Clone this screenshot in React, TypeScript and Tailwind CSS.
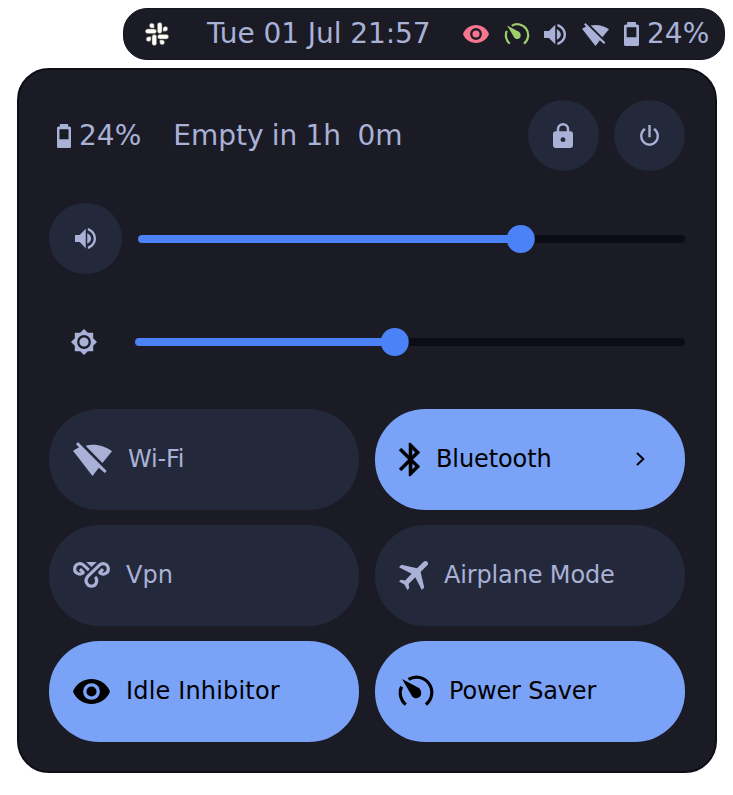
import type { ReactNode } from "react";

type IconProps = { className?: string };

const EYE =
  "M12,9A3,3 0 0,0 9,12A3,3 0 0,0 12,15A3,3 0 0,0 15,12A3,3 0 0,0 12,9M12,17A5,5 0 0,1 7,12A5,5 0 0,1 12,7A5,5 0 0,1 17,12A5,5 0 0,1 12,17M12,4.5C7,4.5 2.73,7.61 1,12C2.73,16.39 7,19.5 12,19.5C17,19.5 21.27,16.39 23,12C21.27,7.61 17,4.5 12,4.5Z";
const LOCK =
  "M12,17A2,2 0 0,0 14,15C14,13.89 13.1,13 12,13A2,2 0 0,0 10,15A2,2 0 0,0 12,17M18,8A2,2 0 0,1 20,10V20A2,2 0 0,1 18,22H6A2,2 0 0,1 4,20V10C4,8.89 4.9,8 6,8H7V6A5,5 0 0,1 12,1A5,5 0 0,1 17,6V8H18M12,3A3,3 0 0,0 9,6V8H15V6A3,3 0 0,0 12,3Z";
const POWER =
  "M16.56,5.44L15.11,6.89C16.84,7.94 18,9.83 18,12A6,6 0 0,1 12,18A6,6 0 0,1 6,12C6,9.83 7.16,7.94 8.88,6.88L7.44,5.44C5.36,6.88 4,9.28 4,12A8,8 0 0,0 12,20A8,8 0 0,0 20,12C20,9.28 18.64,6.88 16.56,5.44M13,3H11V13H13";
const BLUETOOTH =
  "M14.88,16.29L13,18.17V14.41M13,5.83L14.88,7.71L13,9.58M17.71,7.71L12,2H11V9.58L6.41,5L5,6.41L10.59,12L5,17.58L6.41,19L11,14.41V22H12L17.71,16.29L13.41,12L17.71,7.71Z";
const AIRPLANE =
  "M20.56 3.91C21.15 4.5 21.15 5.45 20.56 6.03L16.67 9.92L18.79 19.11L17.38 20.53L13.5 13.1L9.6 17L9.96 19.47L8.89 20.53L7.13 17.35L3.94 15.58L5 14.5L7.5 14.87L11.37 11L3.94 7.09L5.36 5.68L14.55 7.8L18.44 3.91C19 3.33 20 3.33 20.56 3.91Z";
const SPEAKER =
  "M14,3.23V5.29C16.89,6.15 19,8.83 19,12C19,15.17 16.89,17.84 14,18.7V20.77C18,19.86 21,16.28 21,12C21,7.72 18,4.14 14,3.23M16.8,12C16.8,10.23 15.5,8.51 13.5,7.6V16.4C15.5,15.49 16.8,13.76 16.8,12M3,9V15H7L12.2,20.2V3.8L7,9H3Z";
const BRIGHTNESS =
  "M12,8A4,4 0 0,0 8,12A4,4 0 0,0 12,16A4,4 0 0,0 16,12A4,4 0 0,0 12,8M12,18A6,6 0 0,1 6,12A6,6 0 0,1 12,6A6,6 0 0,1 18,12A6,6 0 0,1 12,18M20,8.69V4H15.31L12,0.69L8.69,4H4V8.69L0.69,12L4,15.31V20H8.69L12,23.31L15.31,20H20V15.31L23.31,12L20,8.69Z";
const BATTERY =
  "M15.9,14.8H8.1V6.4H15.900M16.67,4H15.5V2H8.5V4H7.33A1.33,1.33 0 0,0 6,5.33V20.67C6,21.4 6.6,22 7.33,22H16.67A1.33,1.33 0 0,0 18,20.67V5.33A1.33,1.33 0 0,0 16.67,4Z";

function Glyph({ d, box, className = "" }: { d: string; box: string; className?: string }) {
  return (
    <svg viewBox={box} preserveAspectRatio="none" fill="currentColor" className={`block shrink-0 ${className}`}>
      <path d={d} />
    </svg>
  );
}

function WifiOff({ className = "" }: IconProps) {
  return (
    <Glyph
      box="98 126 118 102"
      d="M113 126L200 213L194 219L176 203L157 228L98 152L116 142L107 133ZM136 137C165 130 195 138 216 154L187 189Z"
      className={className}
    />
  );
}

function Gauge({ className = "" }: IconProps) {
  return (
    <svg viewBox="87 124 100 88" className={`block shrink-0 overflow-visible ${className}`} fill="none">
      <path d="M107 208A45 45 0 0 1 94.500 155M115 134A45 45 0 0 1 166 208" stroke="currentColor" strokeWidth="9.200" />
      <path d="M96 133L147 160C153 167 154 177 150 183C144 191 132 191 126 184Z" fill="currentColor" />
    </svg>
  );
}

function Vpn({ className = "" }: IconProps) {
  return (
    <svg viewBox="98 126 112 78" className={`block shrink-0 overflow-visible ${className}`} fill="none">
      <path
        d="M119 147L130 158C120 167 102.500 160 103 147C103 132.500 119 125.500 130 135L146 150"
        stroke="currentColor"
        strokeWidth="9.500"
        strokeLinejoin="bevel"
      />
      <path
        d="M189 147L178 158C188 167 205.500 160 205 147C205 132.500 189 125.500 178 135L142 170C132 182 140 199 154 199C168 199 175 181 165 171"
        stroke="currentColor"
        strokeWidth="9.500"
        strokeLinejoin="bevel"
      />
      <path d="M138 126H170L154 141Z" fill="currentColor" />
    </svg>
  );
}

function Slack({ className = "" }: IconProps) {
  return (
    <svg viewBox="0 0 24 24" className={`block shrink-0 ${className}`}>
      {[0, 90, 180, 270].map((turn) => (
        <g key={turn} transform={`rotate(${turn} 12 12)`} fill="#fdfdf8" stroke="#6b6d64" strokeWidth=".5">
          <rect x="12.400" y="0.400" width="4.600" height="11" rx="2.300" />
          <path d="M18 9.200V6.900A2.400 2.400 0 1 1 20.300 9.200Z" />
        </g>
      ))}
    </svg>
  );
}

function Slider({ value, className = "" }: { value: number; className?: string }) {
  return (
    <div className={`relative h-2 rounded-full bg-[#0c0c14] ${className}`}>
      <div className="h-2 rounded-full bg-[#4c82f7]" style={{ width: value }} />
      <div
        className="absolute -top-2.5 size-[28.5px] -translate-x-1/2 rounded-full bg-[#4c82f7]"
        style={{ left: value }}
      />
    </div>
  );
}

function Tile({
  icon,
  label,
  active,
  labelClass = "",
  children,
}: {
  icon: ReactNode;
  label: string;
  active?: boolean;
  labelClass?: string;
  children?: ReactNode;
}) {
  return (
    <div
      className={`flex h-[100.5px] items-center gap-4 rounded-[50px] pr-10 pl-6 text-[24px] leading-7 ${
        active ? "bg-[#7aa2f7] text-black" : "bg-[#24283b] text-[#a9b1d6]"
      }`}
    >
      {icon}
      <span className={`whitespace-nowrap ${labelClass}`}>{label}</span>
      {children}
    </div>
  );
}

export default function App() {
  return (
    <div className="h-[795px] w-[733px] overflow-hidden bg-white pt-2 font-['DejaVu_Sans',sans-serif] text-[28px] leading-8 text-[#a9b1d6]">
      <header className="ml-[123px] flex h-[52px] w-[602px] items-center rounded-[24px] border border-[#15151f] bg-[#1b1b26] pl-[21px] whitespace-nowrap">
        <Slack className="size-6" />
        <span className="ml-[38px] w-[224px] tracking-[-0.07px]">Tue 01 Jul 21:57</span>
        <Glyph d={EYE} box="1 4.500 22 15" className="ml-8 h-[18px] w-[26px] text-[#f7768e]" />
        <Gauge className="ml-4 h-[22px] w-6 text-[#9ece6a]" />
        <Glyph d={SPEAKER} box="3 3.230 18 17.540" className="ml-[15px] h-[21px] w-[22px]" />
        <WifiOff className="ml-4 h-[23px] w-[27px]" />
        <Glyph d={BATTERY} box="6 2 12 20" className="ml-[15px] h-6 w-[15px]" />
        <span className="ml-2">24%</span>
      </header>

      <main className="mt-2 ml-[17px] h-[705px] w-[700px] rounded-[32px] border-2 border-[#0e0e16] bg-[#1b1b26] px-[30px] pt-[30px]">
        <div className="flex h-[71px] items-center whitespace-nowrap">
          <Glyph d={BATTERY} box="6 2 12 20" className="ml-2 h-6 w-3.5" />
          <span className="ml-2">24%</span>
          <span className="ml-8 whitespace-pre [word-spacing:-0.7px]">Empty in 1h  0m</span>
          <div className="ml-auto flex gap-[15.5px]">
            <button className="flex size-[71px] items-center justify-center rounded-full bg-[#24283b]">
              <Glyph d={LOCK} box="4 1 16 21" className="h-[25px] w-5" />
            </button>
            <button className="flex size-[71px] items-center justify-center rounded-full bg-[#24283b]">
              <Glyph d={POWER} box="4 3 16 17" className="h-[21px] w-[19px]" />
            </button>
          </div>
        </div>

        <div className="mt-8 flex h-[71px] items-center">
          <button className="flex h-[71px] w-[73px] items-center justify-center rounded-full bg-[#24283b]">
            <Glyph d={SPEAKER} box="3 3.230 18 17.540" className="h-[21px] w-[21px]" />
          </button>
          <Slider value={382.5} className="ml-4 w-[547px]" />
        </div>

        <div className="mt-8 flex h-[71px] items-center">
          <Glyph d={BRIGHTNESS} box=".690 .690 22.620 22.620" className="ml-[22px] size-[26px]" />
          <Slider value={259.5} className="ml-[38px] w-[550px]" />
        </div>

        <div className="mt-8 grid grid-cols-2 gap-x-4 gap-y-[15.5px]">
          <Tile icon={<WifiOff className="h-[34px] w-[39px]" />} label="Wi-Fi" labelClass="tracking-[-0.2px]" />
          <Tile
            icon={
              <Glyph
                d={BLUETOOTH}
                box="5 2 12.710 20"
                className="h-[33px] w-[21px] overflow-visible stroke-current stroke-[.2px]"
              />
            }
            label="Bluetooth"
            labelClass="tracking-[-0.1px]"
            active
          >
            <svg viewBox="0 0 9 14" className="ml-auto h-3.5 w-[9px]" fill="none" stroke="currentColor" strokeWidth="2">
              <path d="M1 1L7.300 7L1 13" />
            </svg>
          </Tile>
          <Tile icon={<Vpn className="h-[26px] w-[37px]" />} label="Vpn" />
          <Tile
            icon={<Glyph d={AIRPLANE} box="3.940 3.470 17.060 17.060" className="size-[29px]" />}
            label="Airplane Mode"
            labelClass="tracking-[-0.15px]"
          />
          <Tile
            icon={<Glyph d={EYE} box="1 4.500 22 15" className="h-[25px] w-[37px]" />}
            label="Idle Inhibitor"
            labelClass="tracking-[0.17px]"
            active
          />
          <Tile
            icon={<Gauge className="h-[30px] w-[34px]" />}
            label="Power Saver"
            labelClass="tracking-[-0.17px]"
            active
          />
        </div>
      </main>
    </div>
  );
}
